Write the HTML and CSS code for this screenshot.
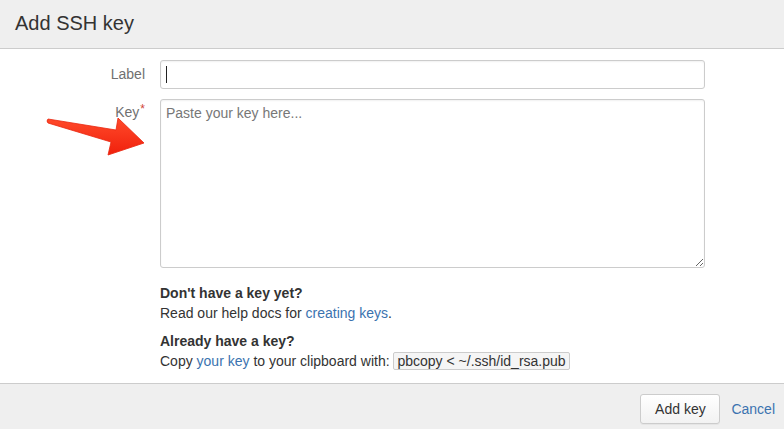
FILE: index.html
```html
<!DOCTYPE html>
<html>
<head>
<meta charset="utf-8">
<link rel="stylesheet" href="styles.css">
</head>
<body>
<div class="dialog">
  <div class="header"><h2 class="title">Add SSH key</h2></div>
  <div class="content">
    <svg class="arrow" width="110" height="45" viewBox="0 0 110 45">
      <defs>
        <linearGradient id="ag" x1="0" y1="0" x2="0" y2="1">
          <stop offset="0" stop-color="#ff4a2a"/>
          <stop offset="1" stop-color="#f0200c"/>
        </linearGradient>
      </defs>
      <path d="M2 3 Q0 5 2 7 L65 26 L62 39 L98 27 L72 2 L70 14 Z" fill="url(#ag)" stroke="#e8260f" stroke-width="0.8" stroke-linejoin="round"/>
    </svg>
    <div class="row">
      <label class="label">Label</label>
      <div class="field">
        <input class="text" type="text">
        <span class="caret"></span>
      </div>
    </div>
    <div class="row row-key">
      <label class="label">Key<span class="req">*</span></label>
      <div class="field">
        <textarea class="area" placeholder="Paste your key here..."></textarea>
      </div>
    </div>
    <div class="help">
      <p class="hp"><strong>Don't have a key yet?</strong><br>Read our help docs for <a href="#">creating keys</a>.</p>
      <p class="hp"><strong>Already have a key?</strong><br>Copy <a href="#">your key</a> to your clipboard with: <code class="code">pbcopy &lt; ~/.ssh/id_rsa.pub</code></p>
    </div>
  </div>
  <div class="footer">
    <button class="btn">Add key</button>
    <a class="cancel" href="#">Cancel</a>
  </div>
</div>
</body>
</html>
```
FILE: styles.css
```css
html, body {
  margin: 0;
  padding: 0;
  background: #fff;
}
body {
  font-family: "Liberation Sans", Arial, sans-serif;
  font-size: 14px;
  color: #333;
  width: 784px;
  height: 429px;
  overflow: hidden;
}
.dialog {
  display: flex;
  flex-direction: column;
  height: 429px;
}
.header {
  height: 48px;
  background: #efefef;
  border-bottom: 1px solid #cccccc;
  box-sizing: content-box;
  display: flex;
  align-items: center;
  padding-left: 15px;
}
.title {
  margin: 0;
  font-size: 20px;
  font-weight: normal;
  color: #333;
  line-height: 24px;
  position: relative;
  top: -1px;
}
.content {
  position: relative;
  flex: 1;
  padding-top: 11px;
}
.arrow {
  position: absolute;
  left: 46px;
  top: 67px;
}
.row {
  display: flex;
  align-items: flex-start;
}
.row-key {
  margin-top: 10px;
}
.label {
  width: 145px;
  text-align: right;
  color: #707070;
  padding-top: 6px;
  line-height: 17px;
  margin-right: 15px;
}
.row-key .label {
  padding-top: 5px;
}
.req {
  color: #d04437;
  font-size: 12px;
  vertical-align: top;
  position: relative;
  top: -3px;
  margin-left: 1px;
}
.field {
  position: relative;
  width: 545px;
}
.text {
  display: block;
  box-sizing: border-box;
  width: 545px;
  height: 29px;
  border: 1px solid #cccccc;
  border-radius: 3px;
  box-shadow: inset 0 1px 2px rgba(0,0,0,0.06);
  margin: 0;
  padding: 0 6px;
  font: 14px "Liberation Sans", Arial, sans-serif;
  outline: none;
}
.caret {
  position: absolute;
  left: 6px;
  top: 6px;
  width: 1px;
  height: 17px;
  background: #222;
}
.area {
  display: block;
  box-sizing: border-box;
  width: 545px;
  height: 169px;
  border: 1px solid #cccccc;
  border-radius: 3px;
  box-shadow: inset 0 1px 2px rgba(0,0,0,0.06);
  margin: 0;
  padding: 5px 5px;
  font: 14px/17px "Liberation Sans", Arial, sans-serif;
  color: #333;
  resize: both;
  outline: none;
}
.area::placeholder {
  color: #777;
}
.help {
  margin-left: 160px;
  margin-top: 15px;
}
.hp {
  margin: 0 0 8px 0;
  line-height: 20px;
}
.hp strong {
  font-weight: bold;
  color: #333;
}
a {
  color: #3b73af;
  text-decoration: none;
}
.code {
  font-family: "Liberation Sans", Arial, sans-serif;
  font-size: 14px;
  background: #f5f5f5;
  border: 1px solid #cccccc;
  border-radius: 2px;
  padding: 0 3px;
  line-height: 16px;
  display: inline-block;
  color: #333;
}
.footer {
  height: 45px;
  background: #efefef;
  border-top: 1px solid #cccccc;
  display: flex;
  align-items: flex-start;
  justify-content: flex-end;
  padding-top: 10px;
  padding-right: 9px;
  box-sizing: border-box;
  height: 46px;
}
.btn {
  height: 30px;
  padding: 0 10px;
  font: 14px "Liberation Sans", Arial, sans-serif;
  color: #333;
  background: linear-gradient(#ffffff, #f2f2f2);
  border: 1px solid #cccccc;
  border-radius: 3px;
  box-shadow: 0 1px 0 rgba(0,0,0,0.04);
  width: 80px;
}
.cancel {
  margin-left: 11px;
  line-height: 30px;
}
```
